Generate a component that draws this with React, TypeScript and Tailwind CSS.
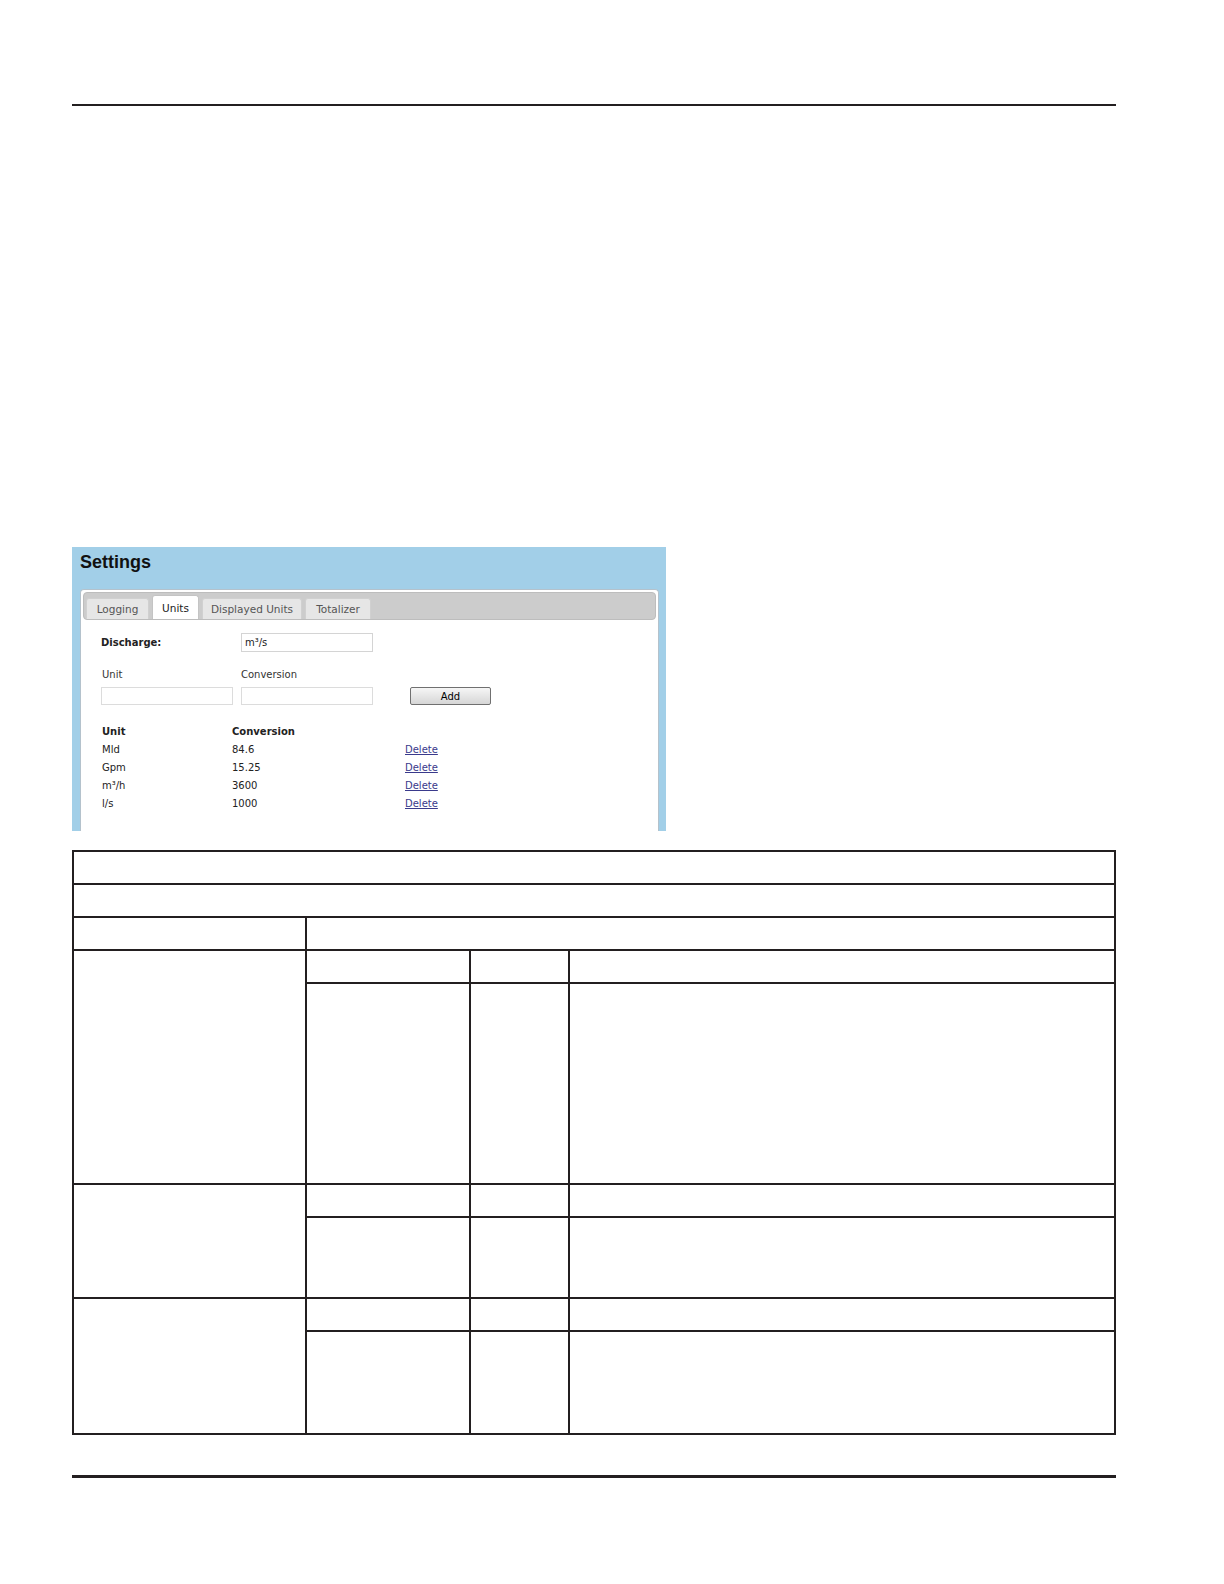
import React from 'react'

const units = [
  { unit: 'Mld', conversion: '84.6' },
  { unit: 'Gpm', conversion: '15.25' },
  { unit: 'm³/h', conversion: '3600' },
  { unit: 'l/s', conversion: '1000' },
]

const tabs = [
  { label: 'Logging', w: 'w-[63px]', active: false },
  { label: 'Units', w: 'w-[47px]', active: true },
  { label: 'Displayed Units', w: 'w-[100px]', active: false },
  { label: 'Totalizer', w: 'w-[66px]', active: false },
]

function SettingsShot() {
  return (
    <div className="mt-[441px] w-[594px] h-[284px] bg-[#a2cfe8] flex flex-col overflow-hidden">
      {/* Title */}
      <div className="h-[42px] pl-[8px] pt-[6px]">
        <h1 className="text-[18px] leading-[18px] font-bold text-[#111] font-['Liberation_Sans',Arial,sans-serif]">
          Settings
        </h1>
      </div>

      {/* Panel */}
      <div className="ml-[8px] w-[579px] flex-1 bg-white border border-b-0 border-[#b4c2cc] rounded-t-[4px] font-['DejaVu_Sans',Verdana,sans-serif] text-[10px] leading-[13px] text-[#222]">
        <div className="px-[2px] pt-[2px]">
          <div className="h-[28px] bg-[#cccccc] border border-[#bdbdbd] rounded-[4px] flex items-end gap-[3px] pl-[2px]">
            {tabs.map((t) => (
              <div
                key={t.label}
                className={
                  t.active
                    ? `${t.w} h-[24px] pt-[2px] bg-white border border-b-0 border-[#c4c4c4] rounded-t-[3px] flex items-center justify-center text-[10.5px] text-[#222]`
                    : `${t.w} h-[21px] pt-[1px] bg-[#e6e6e6] border border-b-0 border-[#d0d0d0] rounded-t-[3px] flex items-center justify-center text-[10.5px] text-[#555]`
                }
              >
                {t.label}
              </div>
            ))}
          </div>
        </div>

        <div className="pl-[20px]">
          {/* Discharge */}
          <div className="mt-[13px] flex items-center h-[19px]">
            <span className="w-[140px] font-bold">Discharge:</span>
            <div className="w-[132px] h-[19px] border border-[#d4d4d4] pl-[3px] flex items-center">m³/s</div>
          </div>

          {/* Add form */}
          <div className="mt-[16px] flex">
            <span className="w-[140px] pl-[1px] text-[#333]">Unit</span>
            <span className="text-[#333]">Conversion</span>
          </div>
          <div className="mt-[6px] flex items-center">
            <div className="w-[132px] h-[18px] border border-[#dcdcdc]" />
            <div className="ml-[8px] w-[132px] h-[18px] border border-[#dcdcdc]" />
            <button className="ml-[37px] w-[81px] h-[18px] border border-[#707070] rounded-[2px] bg-gradient-to-b from-[#f6f6f6] to-[#d6d6d6] text-[10px] leading-[13px] text-black">
              Add
            </button>
          </div>

          {/* Unit list */}
          <div className="mt-[17px]">
            <div className="flex h-[18px] items-center font-bold">
              <span className="w-[131px] pl-[1px]">Unit</span>
              <span>Conversion</span>
            </div>
            {units.map((u) => (
              <div key={u.unit} className="flex h-[18px] items-center">
                <span className="w-[131px] pl-[1px]">{u.unit}</span>
                <span className="w-[173px]">{u.conversion}</span>
                <a className="underline text-[#3a3a8c]">Delete</a>
              </div>
            ))}
          </div>
        </div>
      </div>
    </div>
  )
}

function Cell({ className = '' }: { className?: string }) {
  return <div className={`bg-white ${className}`} />
}

function EmptyTable() {
  return (
    <div className="mt-[19px] w-[1044px] grid grid-cols-[231px_162px_97px_544px] grid-rows-[31px_31px_31px_31px_199px_31px_79px_31px_101px] gap-[2px] p-[2px] bg-[#231f20]">
      <Cell className="col-span-4" />
      <Cell className="col-span-4" />
      <Cell />
      <Cell className="col-span-3" />

      {[0, 1, 2].map((g) => (
        <React.Fragment key={g}>
          <Cell className="row-span-2" />
          <Cell />
          <Cell />
          <Cell />
          <Cell />
          <Cell />
          <Cell />
        </React.Fragment>
      ))}
    </div>
  )
}

export default function App() {
  return (
    <div className="w-[1224px] h-[1584px] bg-white pl-[72px] pt-[104px]">
      <div className="w-[1044px] h-[2px] bg-[#231f20]" />
      <SettingsShot />
      <EmptyTable />
      <div className="mt-[40px] w-[1044px] h-[3px] bg-[#231f20]" />
    </div>
  )
}
